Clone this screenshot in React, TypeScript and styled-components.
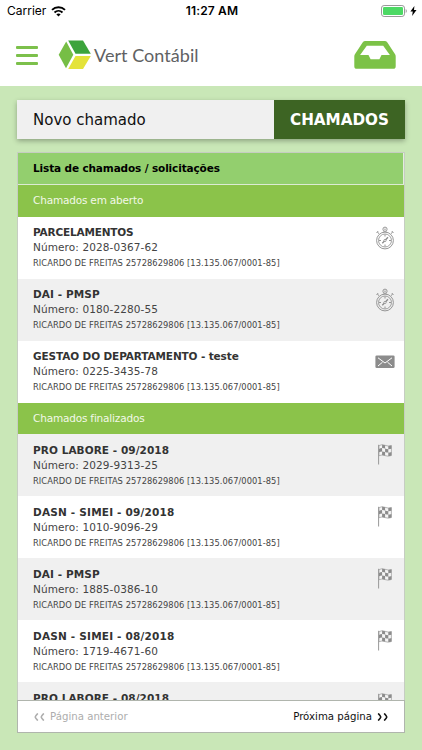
import React from 'react';
import styled, { createGlobalStyle } from 'styled-components';

const GlobalStyle = createGlobalStyle`
  *, *::before, *::after { box-sizing: border-box; }
  body { margin: 0; background: #c9e7b7; overflow: hidden; }
`;

const Screen = styled.div`
  position: relative;
  width: 422px;
  height: 750px;
  overflow: hidden;
  display: flex;
  flex-direction: column;
  background: #c9e7b7;
  font-family: Verdana, 'DejaVu Sans', sans-serif;
  color: #333;
`;

const StatusBar = styled.div`
  height: 22px;
  flex: none;
  display: grid;
  grid-template-columns: 1fr auto 1fr;
  align-items: center;
  padding: 0 5px 0 7px;
  background: #fff;
  color: #000;
  font: 400 12px/22px Inter, sans-serif;
`;

const StatusGroup = styled.div<{ $end?: boolean }>`
  display: flex;
  align-items: center;
  gap: ${p => (p.$end ? '3px' : '5px')};
  justify-content: ${p => (p.$end ? 'flex-end' : 'flex-start')};
`;

const Clock = styled.span`
  font-weight: 600;
  letter-spacing: 0.15px;
`;

const Header = styled.header`
  height: 64px;
  flex: none;
  display: flex;
  align-items: center;
  padding: 2px 26px 0 16px;
  background: #fff;
`;

const MenuButton = styled.div`
  width: 22px;
  height: 19px;
  display: flex;
  flex-direction: column;
  justify-content: space-between;
  margin-top: 1px;
`;

const MenuLine = styled.span`
  height: 3px;
  border-radius: 1px;
  background: #7cc04b;
`;

const Brand = styled.div`
  flex: 1;
  display: flex;
  align-items: center;
  margin-left: 20px;
  svg { flex: none; }
`;

const BrandName = styled.span`
  margin-left: 2px;
  font: 400 18px/24px Lato, sans-serif;
  letter-spacing: 0.05px;
  color: #606163;
  white-space: nowrap;
`;

const Content = styled.main`
  flex: 1;
  padding: 14px 17px 0;
`;

const Tabs = styled.nav`
  display: grid;
  grid-template-columns: 257px 131px;
  height: 39px;
  width: 388px;
  box-shadow: 0 2px 5px rgba(0, 0, 0, 0.3);
`;

const Tab = styled.div<{ $active?: boolean }>`
  display: flex;
  align-items: center;
  padding-top: 1px;
  padding-left: 16px;
  background: ${p => (p.$active ? '#3d6423' : '#f0f0f0')};
  color: ${p => (p.$active ? '#fff' : '#111')};
  font-size: ${p => (p.$active ? '15.2px' : '15px')};
  font-weight: ${p => (p.$active ? 700 : 400)};
  white-space: nowrap;
`;

const List = styled.section`
  width: 388px;
  height: 560px;
  margin-top: 13px;
  border: 1px solid #c6cdc2;
  background: #fff;
  overflow: hidden;
`;

const ListTitle = styled.h1`
  height: 32.3px;
  margin: 0;
  padding-left: 15px;
  border-right: 1px solid #e3eedd;
  border-bottom: 1px solid #dcebd3;
  background: #93cf6e;
  color: #000;
  font-size: 10.5px;
  letter-spacing: -0.13px;
  line-height: 31px;
`;

const SectionTitle = styled.h2`
  height: 31.25px;
  margin: 0;
  padding-left: 15px;
  background: #8bc34a;
  color: #f2f8e8;
  font-size: 10.5px;
  font-weight: 400;
  letter-spacing: -0.18px;
  line-height: 31px;
`;

const Row = styled.article<{ $shaded?: boolean }>`
  height: 62.1px;
  display: flex;
  justify-content: space-between;
  padding: 8.6px 9px 0 15px;
  background: ${p => (p.$shaded ? '#f0f0f0' : '#fff')};
`;

const RowText = styled.div`
  white-space: nowrap;
`;

const RowTitle = styled.div<{ $tracking: number }>`
  font-size: 10.5px;
  font-weight: 700;
  line-height: 15px;
  letter-spacing: ${p => p.$tracking}px;
  color: #333;
`;

const RowNumber = styled.div`
  font-size: 10.5px;
  line-height: 14px;
  letter-spacing: 0.1px;
  color: #444;
`;

const RowOwner = styled.div`
  font-size: 8.3px;
  line-height: 18px;
  letter-spacing: 0.06px;
  color: #444;
`;

const IconSlot = styled.div`
  width: 20px;
  height: 24px;
  margin-top: 0.5px;
  display: flex;
  justify-content: center;
`;

const Pager = styled.footer`
  position: absolute;
  left: 17px;
  top: 700px;
  width: 388px;
  height: 33px;
  display: flex;
  justify-content: space-between;
  align-items: center;
  padding: 0 16px;
  border: 1px solid #b0b5ad;
  background: #fff;
  font-size: 10.2px;
`;

const PageLink = styled.span<{ $disabled?: boolean }>`
  display: flex;
  align-items: center;
  gap: 5px;
  color: ${p => (p.$disabled ? '#adadad' : '#111')};
`;

const Wifi = () => (
  <svg width="15" height="11" viewBox="0 0 15 11" fill="none" stroke="#000" strokeWidth="1.9">
    <path d="M1 3.9C4.6 .4 10.4 .4 14 3.9" />
    <path d="M3.5 6.5C5.8 4.3 9.2 4.3 11.5 6.5" />
    <path d="M5.3 8.3Q7.5 6.5 9.7 8.3L7.5 10.6Z" fill="#000" stroke="none" />
  </svg>
);

const Battery = () => (
  <svg width="26" height="12" viewBox="0 0 26 12">
    <rect x=".5" y=".5" width="23" height="11" rx="2.6" fill="#fff" stroke="#999" />
    <rect x="2" y="2" width="20" height="8" rx="1.2" fill="#4cd964" />
    <path d="M24.7 4v4q1.1-.6 1.1-2t-1.1-2" fill="#999" />
  </svg>
);

const Bolt = () => (
  <svg width="7" height="10" viewBox="0 0 7 10">
    <path d="M4.4 0L.4 5.6h2.4L2.1 10l4.4-6H4Z" fill="#000" />
  </svg>
);

const Cube = () => (
  <svg width="34" height="30" viewBox="0 0 34 30">
    <path d="M8.2 1.5L.7 14.8 8 28.2 15.3 14.8Z" fill="#76be45" />
    <path d="M10.2.6H25L32.8 13.8H17.5Z" fill="#3ca43c" />
    <path d="M17.5 15.9h15.3L25 29.1H10.2Z" fill="#e4e33a" />
  </svg>
);

const Inbox = () => (
  <svg width="42" height="28" viewBox="0 0 42 28">
    <path
      fillRule="evenodd"
      fill="#7cc247"
      d="M11.3 0h19.4q1.6 0 2.5 1.3l7.9 11.9q.6 1 .6 2.2v9.8q0 2.6-2.6 2.6H2.9Q.3 27.8.3 25.2V15.4q0-1.2.6-2.2L8.8 1.3Q9.700 0 11.3 0ZM12.8 4.700 6.100 13.900H14.5L16.600 18.300h8.800l2.100-4.400h8.400L29.200 4.700Z"
    />
  </svg>
);

const Stopwatch = () => (
  <svg width="20" height="24" viewBox="0 0 20 24" fill="none" stroke="#8b8b8b">
    <circle cx="10" cy="14.5" r="8.4" strokeWidth=".9" />
    <circle cx="10" cy="14.5" r="6.5" strokeWidth=".8" />
    <circle cx="10" cy="3.2" r="2.1" strokeWidth=".9" />
    <path d="M9 5.3v1M11 5.3v1M9.2 3.2h1.6" strokeWidth=".9" />
    <path d="M2.2 5.9 4 7.6M1.6 6.7l1.5-1.5M17.8 5.9 16 7.6M18.4 6.700l-1.5-1.5" strokeWidth="1" />
    <path d="M10 8.5v2M10 18.5v2M4 14.5h2M14 14.5h2" strokeWidth=".9" />
    <path d="M7.3 17.2 13 11.3" strokeWidth="1.3" />
    <circle cx="10" cy="14.5" r="1.1" fill="#fff" strokeWidth=".8" />
  </svg>
);

const Envelope = () => (
  <svg width="20" height="24" viewBox="0 0 20 24">
    <rect x=".4" y="5.500" width="19.2" height="12.500" rx="1.3" fill="#8c8c8c" />
    <path d="M3 7.800 10 13 17 7.800M3 16 7.5 12.200M17 16 12.5 12.200" fill="none" stroke="#fff" strokeWidth="1" />
  </svg>
);

const Flag = () => (
  <svg width="20" height="24" viewBox="0 0 20 24">
    <path d="M3.6 1.8V21.500" stroke="#999" strokeWidth="1" />
    <path d="M4 2.6Q7 1 10 2.3T16.400 2.5V12.5Q13.200 13.8 10 12.600T4 12.7Z" fill="#f5f5f5" stroke="#999" strokeWidth=".7" />
    <path
      fill="#8c8c8c"
      d="M7.1 1.7q2 0 3 .6v3.3q-1.4-.6-3-.5ZM13.3 2.9q1.7.1 3.1-.4V5.8q-1.5.5-3.1.4ZM4 5.900q1.4-.8 3.1-.8V8.500q-1.7 0-3.1.8ZM10.1 5.600q1.5.6 3.2.6V9.600q-1.7 0-3.2-.6ZM7.1 8.500q1.5 0 3 .5v3.600q-1.5-.6-3-.6ZM13.3 9.600q1.6 0 3.1-.5v3.400q-1.5.6-3.1.6Z"
    />
  </svg>
);

const Chevrons = ({ left }: { left?: boolean }) => (
  <svg width="11" height="8" viewBox="0 0 11 8" fill="none" stroke="currentColor" strokeWidth="1.6">
    {left ? (
      <path d="M3.800 .4Q1.200 3.200 1.200 4T3.800 7.600M9.800 .4Q7.200 3.200 7.200 4T9.800 7.600" />
    ) : (
      <path d="M1.200 .4Q3.800 3.200 3.800 4T1.200 7.600M7.200 .4Q9.800 3.200 9.800 4T7.200 7.600" />
    )}
  </svg>
);

const icons = { watch: Stopwatch, mail: Envelope, flag: Flag };

type Ticket = { title: string; number: string; icon: keyof typeof icons; tracking: number; shaded?: boolean };

const openTickets: Ticket[] = [
  { title: 'PARCELAMENTOS', number: '2028-0367-62', icon: 'watch', tracking: -0.18 },
  { title: 'DAI - PMSP', number: '0180-2280-55', icon: 'watch', tracking: 0.1, shaded: true },
  { title: 'GESTAO DO DEPARTAMENTO - teste', number: '0225-3435-78', icon: 'mail', tracking: -0.12 },
];

const closedTickets: Ticket[] = [
  { title: 'PRO LABORE - 09/2018', number: '2029-9313-25', icon: 'flag', tracking: 0.07, shaded: true },
  { title: 'DASN - SIMEI - 09/2018', number: '1010-9096-29', icon: 'flag', tracking: 0.2 },
  { title: 'DAI - PMSP', number: '1885-0386-10', icon: 'flag', tracking: 0.1, shaded: true },
  { title: 'DASN - SIMEI - 08/2018', number: '1719-4671-60', icon: 'flag', tracking: 0.2 },
  { title: 'PRO LABORE - 08/2018', number: '', icon: 'flag', tracking: 0.07, shaded: true },
];

const TicketRow = ({ ticket }: { ticket: Ticket }) => {
  const Icon = icons[ticket.icon];
  return (
    <Row $shaded={ticket.shaded}>
      <RowText>
        <RowTitle $tracking={ticket.tracking}>{ticket.title}</RowTitle>
        {ticket.number && (
          <>
            <RowNumber>Número: {ticket.number}</RowNumber>
            <RowOwner>RICARDO DE FREITAS 25728629806 [13.135.067/0001-85]</RowOwner>
          </>
        )}
      </RowText>
      <IconSlot><Icon /></IconSlot>
    </Row>
  );
};

export default function App() {
  return (
    <>
      <GlobalStyle />
      <Screen>
        <StatusBar>
          <StatusGroup>Carrier <Wifi /></StatusGroup>
          <Clock>11:27 AM</Clock>
          <StatusGroup $end><Battery /><Bolt /></StatusGroup>
        </StatusBar>
        <Header>
          <MenuButton><MenuLine /><MenuLine /><MenuLine /></MenuButton>
          <Brand><Cube /><BrandName>Vert Contábil</BrandName></Brand>
          <Inbox />
        </Header>
        <Content>
          <Tabs>
            <Tab>Novo chamado</Tab>
            <Tab $active>CHAMADOS</Tab>
          </Tabs>
          <List>
            <ListTitle>Lista de chamados / solicitações</ListTitle>
            <SectionTitle>Chamados em aberto</SectionTitle>
            {openTickets.map(t => <TicketRow key={t.number} ticket={t} />)}
            <SectionTitle>Chamados finalizados</SectionTitle>
            {closedTickets.map(t => <TicketRow key={t.title + t.number} ticket={t} />)}
          </List>
        </Content>
        <Pager>
          <PageLink $disabled><Chevrons left />Página anterior</PageLink>
          <PageLink>Próxima página<Chevrons /></PageLink>
        </Pager>
      </Screen>
    </>
  );
}
